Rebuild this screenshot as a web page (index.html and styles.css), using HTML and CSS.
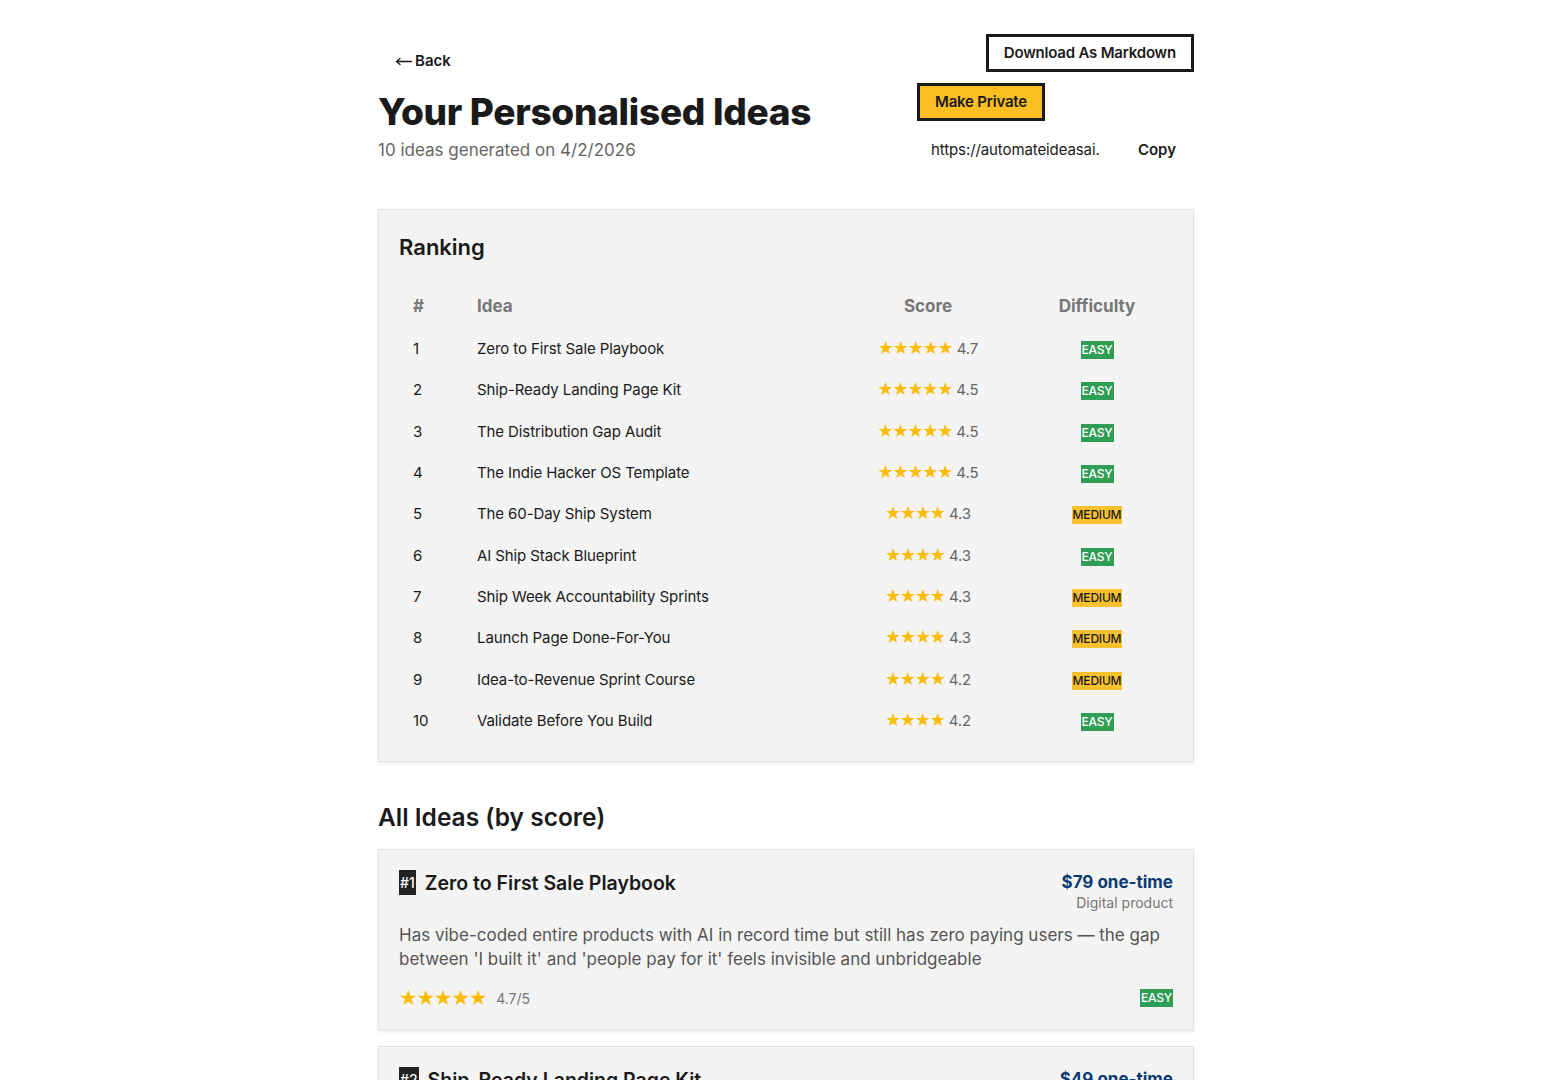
FILE: index.html
```html
<!DOCTYPE html>
<html lang="en">
<head>
    <meta charset="UTF-8">
    <meta name="viewport" content="width=device-width, initial-scale=1.0">
    <title>Your Personalised Ideas</title>
    <link rel="stylesheet" href="styles.css">
</head>
<body>
    <main class="page">
        <header class="top">
            <div class="intro">
                <a class="back" href="#">
                    <svg class="arrow" width="17" height="9" viewBox="0 0 17 9" fill="none" stroke="#1a1a1a" stroke-width="1.3" stroke-linecap="round">
                        <path d="M1.5 4.5h15M1.5 4.5l3.5-3M1.5 4.5l3.5 3"/>
                    </svg>Back</a>
                <h1>Your Personalised Ideas</h1>
                <p class="meta">10 ideas generated on 4/2/2026</p>
            </div>
            <div class="actions">
                <button class="btn btn-outline">Download As Markdown</button>
                <button class="btn btn-yellow">Make Private</button>
                <div class="share">
                    <input class="share-url" type="text" value="https://automateideasai.com/ideas/4f2a9c" readonly>
                    <button class="copy">Copy</button>
                </div>
            </div>
        </header>

        <section class="box ranking">
            <h2>Ranking</h2>
            <table>
                <thead>
                    <tr>
                        <th class="col-num">#</th>
                        <th class="col-idea">Idea</th>
                        <th class="col-score">Score</th>
                        <th class="col-diff">Difficulty</th>
                    </tr>
                </thead>
                <tbody>
                    <tr><td>1</td><td>Zero to First Sale Playbook</td><td class="score"><span class="stars">★★★★★</span> 4.7</td><td class="diff"><span class="tag easy">Easy</span></td></tr>
                    <tr><td>2</td><td>Ship-Ready Landing Page Kit</td><td class="score"><span class="stars">★★★★★</span> 4.5</td><td class="diff"><span class="tag easy">Easy</span></td></tr>
                    <tr><td>3</td><td>The Distribution Gap Audit</td><td class="score"><span class="stars">★★★★★</span> 4.5</td><td class="diff"><span class="tag easy">Easy</span></td></tr>
                    <tr><td>4</td><td>The Indie Hacker OS Template</td><td class="score"><span class="stars">★★★★★</span> 4.5</td><td class="diff"><span class="tag easy">Easy</span></td></tr>
                    <tr><td>5</td><td>The 60-Day Ship System</td><td class="score"><span class="stars">★★★★</span> 4.3</td><td class="diff"><span class="tag medium">Medium</span></td></tr>
                    <tr><td>6</td><td>AI Ship Stack Blueprint</td><td class="score"><span class="stars">★★★★</span> 4.3</td><td class="diff"><span class="tag easy">Easy</span></td></tr>
                    <tr><td>7</td><td>Ship Week Accountability Sprints</td><td class="score"><span class="stars">★★★★</span> 4.3</td><td class="diff"><span class="tag medium">Medium</span></td></tr>
                    <tr><td>8</td><td>Launch Page Done-For-You</td><td class="score"><span class="stars">★★★★</span> 4.3</td><td class="diff"><span class="tag medium">Medium</span></td></tr>
                    <tr><td>9</td><td>Idea-to-Revenue Sprint Course</td><td class="score"><span class="stars">★★★★</span> 4.2</td><td class="diff"><span class="tag medium">Medium</span></td></tr>
                    <tr><td>10</td><td>Validate Before You Build</td><td class="score"><span class="stars">★★★★</span> 4.2</td><td class="diff"><span class="tag easy">Easy</span></td></tr>
                </tbody>
            </table>
        </section>

        <h2 class="section-title">All Ideas (by score)</h2>

        <article class="box idea">
            <div class="idea-head">
                <h3><span class="rank">#1</span>Zero to First Sale Playbook</h3>
                <div class="price">
                    <div class="amount">$79 one-time</div>
                    <div class="kind">Digital product</div>
                </div>
            </div>
            <p class="desc">Has vibe-coded entire products with AI in record time but still has zero paying users — the gap between 'I built it' and 'people pay for it' feels invisible and unbridgeable</p>
            <div class="idea-foot">
                <div class="rating"><span class="stars">★★★★★</span><span class="out-of">4.7/5</span></div>
                <span class="tag easy">Easy</span>
            </div>
        </article>

        <article class="box idea">
            <div class="idea-head">
                <h3><span class="rank">#2</span>Ship-Ready Landing Page Kit</h3>
                <div class="price">
                    <div class="amount">$49 one-time</div>
                    <div class="kind">Digital product</div>
                </div>
            </div>
            <p class="desc">Spends weeks polishing a landing page that never converts because nobody told them what a buyer needs to see first</p>
            <div class="idea-foot">
                <div class="rating"><span class="stars">★★★★★</span><span class="out-of">4.5/5</span></div>
                <span class="tag easy">Easy</span>
            </div>
        </article>
    </main>
</body>
</html>
```

FILE: styles.css
```css
body {
    margin: 0;
    padding: 34px 0 40px 7px;
    background-color: white;
    color: #1a1a1a;
    font-family: Inter, "Noto Sans", sans-serif;
}
.page {
    width: 816px;
    margin: 0 auto;
}

/* header */
.top {
    display: flex;
    justify-content: space-between;
    align-items: flex-start;
}
.intro {
    padding-top: 10px;
}
.back {
    display: inline-flex;
    align-items: center;
    padding: 8px 17px;
    font-size: 15px;
    line-height: 18px;
    font-weight: 600;
    color: #1a1a1a;
    text-decoration: none;
}
.back .arrow {
    margin: 1px 3px 0 0;
}
h1 {
    margin: 11px 0 3px;
    font-size: 37px;
    line-height: 46px;
    font-weight: 800;
    letter-spacing: -0.3px;
}
.meta {
    margin: 0;
    font-size: 17px;
    line-height: 24px;
    color: #666;
}
.actions {
    width: 277px;
    display: flex;
    flex-direction: column;
}
.btn {
    font-family: inherit;
    font-size: 15px;
    font-weight: 600;
    line-height: 18px;
    letter-spacing: -0.2px;
    color: #1a1a1a;
    border: 3px solid #1a1a1a;
    padding: 7px 15px;
    cursor: pointer;
}
.btn-outline {
    align-self: flex-end;
    background-color: white;
}
.btn-yellow {
    align-self: flex-start;
    margin-top: 11px;
    background-color: #fbbf24;
}
.share {
    display: flex;
    align-items: center;
    margin-top: 17px;
}
.share-url {
    width: 196px;
    box-sizing: border-box;
    padding: 0 14px;
    border: none;
    background: transparent;
    font-family: inherit;
    font-size: 15px;
    line-height: 24px;
    letter-spacing: -0.1px;
    color: #1a1a1a;
    outline: none;
}
.copy {
    flex: 1;
    text-align: right;
    padding: 0 18px 0 0;
    border: none;
    background: transparent;
    font-family: inherit;
    font-size: 15px;
    font-weight: 600;
    line-height: 24px;
    color: #1a1a1a;
}

/* cards */
.box {
    background-color: #f4f4f4;
    border: 1px solid #e2e2e2;
    box-shadow: 0 2px 3px rgba(0, 0, 0, 0.08);
    padding: 20px;
}
.ranking {
    margin-top: 47px;
}
.ranking h2 {
    margin: 0 0 22px;
    font-size: 22px;
    line-height: 34px;
    font-weight: 600;
}
table {
    width: 100%;
    border-collapse: collapse;
    table-layout: fixed;
}
th {
    padding: 8px 14px 10px;
    font-size: 17px;
    line-height: 24px;
    font-weight: 700;
    color: #777;
    text-align: left;
}
td {
    padding: 10px 14px;
    height: 21.33px;
    font-size: 15px;
    line-height: 21px;
    letter-spacing: -0.1px;
}
.col-num { width: 36px; }
.col-idea { width: 344px; }
.col-score { width: 158px; text-align: center; }
.col-diff { text-align: center; }
.score {
    text-align: center;
    color: #666;
}
.diff {
    text-align: center;
}
.stars {
    font-family: "DejaVu Sans", sans-serif;
    font-size: 18px;
    line-height: 0;
    color: #fbbc05;
    letter-spacing: -1.2px;
}
.tag {
    display: inline-block;
    padding: 0 1px;
    font-size: 12px;
    line-height: 18px;
    font-weight: 500;
    letter-spacing: -0.2px;
    text-transform: uppercase;
    vertical-align: middle;
}
.easy {
    background-color: #2f9e55;
    color: white;
}
.medium {
    background-color: #f9c12e;
    color: #1a1a1a;
}

/* idea list */
.section-title {
    margin: 39px 0 16px;
    font-size: 24.5px;
    line-height: 32px;
    font-weight: 600;
}
.idea {
    margin-bottom: 16px;
}
.idea-head {
    display: flex;
    justify-content: space-between;
    align-items: flex-start;
}
.idea h3 {
    margin: 0;
    display: flex;
    align-items: center;
    font-size: 19.5px;
    line-height: 24px;
    font-weight: 600;
}
.rank {
    display: inline-block;
    margin-right: 9px;
    padding: 2px 1px;
    background-color: #222;
    color: white;
    font-size: 14px;
    line-height: 21px;
    font-weight: 500;
}
.price {
    text-align: right;
}
.amount {
    font-size: 17px;
    line-height: 24px;
    font-weight: 700;
    color: #0b3b73;
}
.kind {
    font-size: 14px;
    line-height: 18px;
    color: #777;
}
.desc {
    margin: 11px 0 0;
    font-size: 17px;
    line-height: 24px;
    color: #555;
}
.idea-foot {
    margin-top: 16px;
    display: flex;
    justify-content: space-between;
    align-items: center;
}
.rating {
    display: flex;
    align-items: center;
}
.rating .stars {
    font-size: 21px;
    line-height: 22px;
    letter-spacing: -1.4px;
}
.out-of {
    margin-left: 10px;
    font-size: 14px;
    color: #777;
}
```
